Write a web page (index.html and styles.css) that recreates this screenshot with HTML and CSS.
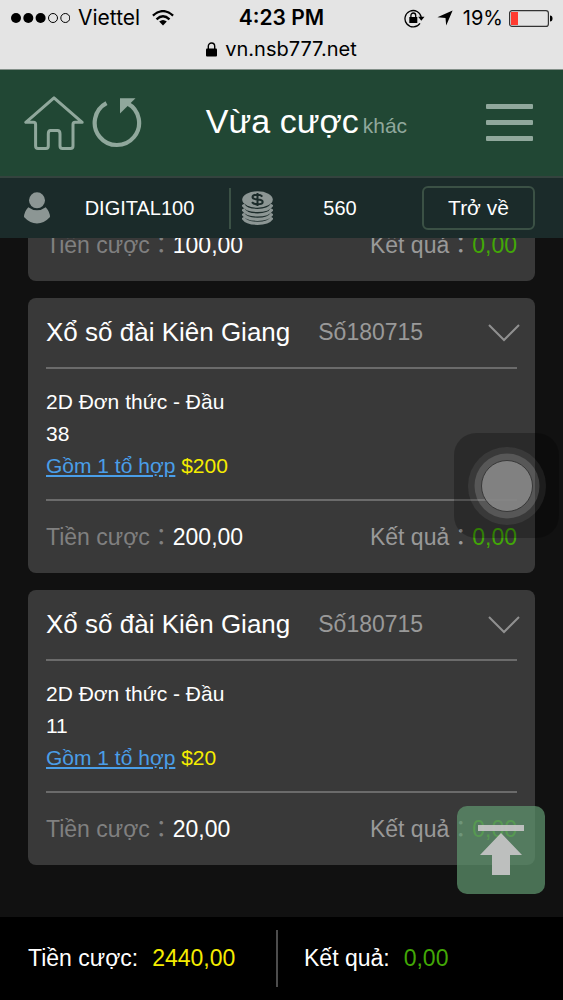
FILE: index.html
```html
<!DOCTYPE html>
<html lang="vi">
<head>
<meta charset="utf-8">
<meta name="viewport" content="width=device-width, initial-scale=1">
<title>Vừa cược</title>
<link rel="stylesheet" href="styles.css">
</head>
<body>
<div class="status">
  <div class="status-row">
    <div class="status-left">
      <svg width="60" height="12" viewBox="0 0 60 12"><g fill="#000"><circle cx="6" cy="6" r="5"/><circle cx="18.300" cy="6" r="5"/><circle cx="30.600" cy="6" r="5"/></g><g fill="none" stroke="#000"><circle cx="43" cy="6" r="4.500"/><circle cx="55.300" cy="6" r="4.500"/></g></svg>
      <span class="carrier">Viettel</span>
      <svg width="22" height="16" viewBox="0 0 22 16"><g fill="none" stroke="#000" stroke-width="2.300"><path d="M.9 5.600Q11-3.400 21.100 5.600"/><path d="M4.500 9.300Q11 3.200 17.500 9.300"/></g><path d="M7.200 11.600Q11 8.600 14.800 11.600L11 15.600Z"/></svg>
    </div>
    <div class="clock">4:23 PM</div>
    <div class="status-right">
      <svg width="21" height="19" viewBox="0 0 21 19"><path d="M16 14.300A8.200 8.200 0 1 1 17.300 8.500" fill="none" stroke="#000" stroke-width="1.300"/><path d="M14.200 7.800h6.300l-3.200 4z"/><rect x="5.300" y="8" width="8" height="6"/><path d="M6.900 8.500V6.400a2.400 2.400 0 0 1 4.800 0V8.500" fill="none" stroke="#000" stroke-width="1.300"/></svg>
      <svg class="locate" width="16" height="16" viewBox="0 0 16 16"><path d="M15.600.4L9.200 15.600 8.500 8 .4 7.200Z"/></svg>
      <span>19%</span>
      <svg width="44" height="17" viewBox="0 0 44 17"><rect x=".6" y=".6" width="38.800" height="15.800" rx="2.500" fill="none" stroke="#333" stroke-width="1.200"/><rect x="2" y="2" width="7" height="13" fill="#ff3b30"/><path d="M41 5.500q2.500 0 2.500 3t-2.500 3z"/></svg>
    </div>
  </div>
  <div class="address">
    <svg width="11" height="15" viewBox="0 0 11 15"><rect x="0" y="6.500" width="11" height="8" rx="1"/><path d="M2.300 7V4.200a3.200 3.200 0 0 1 6.400 0V7" fill="none" stroke="#000" stroke-width="1.400"/></svg>
    <span>vn.nsb777.net</span>
  </div>
</div>

<header class="header">
  <nav class="header-nav">
    <a class="icon-link" href="#" aria-label="Trang chủ"><svg width="60" height="54" viewBox="0 0 60 54"><path d="M30 1.800L1.800 26.300H9.500Q11.600 26.300 11.600 28.500V50Q11.600 52.400 14 52.400H22Q24.300 52.400 24.300 50V38Q24.300 34.500 26.500 34.500H33.500Q36 34.500 36 38V50Q36 52.400 38.500 52.400H46.500Q49 52.400 49 50V28.500Q49 26.300 51 26.300H58.200Z" fill="none" stroke="#90a89c" stroke-width="3" stroke-linejoin="round"/></svg></a>
    <button class="icon-button" type="button" aria-label="Tải lại"><svg width="50" height="50" viewBox="0 0 50 50"><path d="M14.500 5.200A22.200 22.200 0 1 0 35.500 5.300" fill="none" stroke="#90a89c" stroke-width="4.200"/><path d="M28 .2H43.500L28 15.500Z" fill="#90a89c"/></svg></button>
  </nav>
  <div class="title-group"><h1 class="title">Vừa cược</h1><span class="title-more">khác</span></div>
  <button class="icon-button menu" type="button" aria-label="Menu"><svg width="47" height="38" viewBox="0 0 47 38" fill="#90a89c"><rect y="0" width="47" height="5" rx="1"/><rect y="16" width="47" height="5" rx="1"/><rect y="32" width="47" height="5" rx="1"/></svg></button>
</header>

<section class="account">
  <div class="account-item account-user">
    <svg width="26" height="32" viewBox="0 0 26 32" fill="#8c9694"><circle cx="13" cy="8.300" r="8"/><path d="M4.300 15.200Q13 21.500 21.700 15.200Q26 20 26 25Q20 31.500 13 31.500T0 25Q0 20 4.300 15.200Z"/></svg>
    <span class="account-text">DIGITAL100</span>
  </div>
  <div class="account-item">
    <svg width="31" height="34" viewBox="0 0 31 34"><ellipse cx="15.500" cy="8.500" rx="15.300" ry="8.300" fill="#8c9694"/><g fill="none" stroke="#8c9694" stroke-width="3.200"><path d="M.8 13.500Q4 19.500 15.500 19.500T30.200 13.500"/><path d="M.8 18Q4 24 15.500 24T30.200 18"/><path d="M.8 22.500Q4 28.300 15.500 28.300T30.200 22.500"/><path d="M.8 26.500Q4 32.300 15.500 32.300T30.200 26.500"/></g><path d="M20.300 5.600Q19 3.800 15.300 3.800Q10.500 3.800 10.500 6.100Q10.500 8.200 15.500 8.500Q20.700 8.800 20.700 11Q20.700 13.300 15.600 13.300Q11.500 13.300 10 11.200M15.500 2V15" fill="none" stroke="#1b2b2a" stroke-width="2"/></svg>
    <span class="account-text">560</span>
  </div>
  <button class="back" type="button">Trở về</button>
</section>

<main class="bets">
  <article class="card">
    <div class="card-foot"><div class="stake">Tiền cược：<span class="amount">100,00</span></div><div class="result">Kết quả：<span class="win">0,00</span></div></div>
  </article>
  <article class="card">
    <div class="card-head"><h2 class="game">Xổ số đài Kiên Giang</h2><span class="issue">Số180715</span><button class="toggle" type="button" aria-label="Thu gọn"><svg width="32" height="18" viewBox="0 0 32 18"><path d="M1 1L16 16 31 1" fill="none" stroke="#909090" stroke-width="2"/></svg></button></div>
    <div class="card-body"><div>2D Đơn thức - Đầu</div><div>38</div><div><a class="combo" href="#">Gồm 1 tổ hợp</a> <span class="price">$200</span></div></div>
    <div class="card-foot"><div class="stake">Tiền cược：<span class="amount">200,00</span></div><div class="result">Kết quả：<span class="win">0,00</span></div></div>
  </article>
  <article class="card">
    <div class="card-head"><h2 class="game">Xổ số đài Kiên Giang</h2><span class="issue">Số180715</span><button class="toggle" type="button" aria-label="Thu gọn"><svg width="32" height="18" viewBox="0 0 32 18"><path d="M1 1L16 16 31 1" fill="none" stroke="#909090" stroke-width="2"/></svg></button></div>
    <div class="card-body"><div>2D Đơn thức - Đầu</div><div>11</div><div><a class="combo" href="#">Gồm 1 tổ hợp</a> <span class="price">$20</span></div></div>
    <div class="card-foot"><div class="stake">Tiền cược：<span class="amount">20,00</span></div><div class="result">Kết quả：<span class="win">0,00</span></div></div>
  </article>
</main>

<footer class="totals">
  <div class="total total-stake"><span>Tiền cược:</span><span class="price">2440,00</span></div>
  <div class="total total-result"><span>Kết quả:</span><span class="win">0,00</span></div>
</footer>

<button class="assist" type="button" aria-label="AssistiveTouch"><svg width="78" height="78" viewBox="0 0 78 78"><circle cx="39" cy="39" r="39" fill="#fff" fill-opacity=".07"/><circle cx="39" cy="39" r="32.500" fill="#fff" fill-opacity=".15"/><circle cx="39" cy="39" r="25.500" fill="#858585" fill-opacity=".93" stroke="#383838" stroke-width="1"/></svg></button>
<button class="to-top" type="button" aria-label="Lên đầu trang"><svg width="48" height="52" viewBox="0 0 48 52" fill="#c4c4c4" fill-opacity=".95"><rect x="1" y="1" width="46" height="6"/><path d="M24 9L45 31H33V51H15V31H3Z"/></svg></button>
</body>
</html>
```
FILE: styles.css
```css
* { box-sizing: border-box; }

body {
  margin: 0;
  height: 100vh;
  display: flex;
  flex-direction: column;
  overflow: hidden;
  background: #111;
  color: #fff;
  font-family: "Liberation Sans", "Noto Sans CJK TC", Arial, sans-serif;
  font-size: 21px;
}

svg { display: block; flex: none; }

button {
  margin: 0;
  padding: 0;
  border: 0;
  background: none;
  color: inherit;
  font: inherit;
  cursor: pointer;
}

.status {
  flex: none;
  padding: 6px 10px 8px;
  background: #e4e4e4;
  color: #000;
  font-family: Inter, "Liberation Sans", sans-serif;
  font-size: 20px;
  line-height: 24px;
  border-bottom: 1px solid #839089;
}
.status-row { display: grid; grid-template-columns: 1fr auto 1fr; align-items: center; }
.status-left, .status-right { display: flex; align-items: center; }
.carrier { margin: 0 12px 0 8px; font-size: 21px; }
.clock { font-size: 21px; font-weight: 600; }
.status-right { justify-content: flex-end; gap: 6px; }
.locate { margin: 0 4px 0 6px; }
.address { display: flex; justify-content: center; align-items: center; gap: 8px; margin-top: 7px; }

.header {
  flex: none;
  display: grid;
  grid-template-columns: 182fr auto 126fr;
  align-items: center;
  padding: 26px 30px 26px 24px;
  background: #214734;
}
.header-nav { display: flex; align-items: center; gap: 8px; }
.menu { justify-self: end; }
.title-group { display: flex; align-items: baseline; gap: 4px; line-height: 40px; white-space: nowrap; }
.title { margin: 0; font-size: 34px; font-weight: 400; }
.title-more { font-size: 21px; color: #90a89c; }

.account {
  flex: none;
  display: grid;
  grid-template-columns: 207fr 191fr 113px;
  align-items: center;
  padding: 8px 28px 8px 24px;
  background: #1b2b2a;
  border-top: 2px solid #34433e;
}
.account-item { display: flex; align-items: center; height: 41px; margin-right: 15px; padding-left: 11px; }
.account-user { margin: 0; padding: 0; border-right: 2px solid #3b5145; }
.account-text { flex: 1; text-align: center; font-size: 20px; }
.back { height: 44px; border: 2px solid #3b5145; border-radius: 6px; }

.bets {
  flex: 1;
  min-height: 0;
  display: flex;
  flex-direction: column;
  justify-content: flex-end;
  gap: 17px;
  padding: 0 28px 52px;
  overflow: hidden;
}
.card { flex: none; padding: 0 18px; background: #393939; border-radius: 8px; }
.card-head { display: flex; align-items: center; height: 71px; border-bottom: 2px solid #6b6b6b; }
.game { margin: 0 28px 0 0; font-size: 26px; font-weight: 400; white-space: nowrap; }
.issue { color: #999; font-size: 23px; }
.toggle { margin-left: auto; margin-right: -3px; }
.card-body { padding: 17px 0; line-height: 32px; border-bottom: 2px solid #6b6b6b; }
.combo { color: #4a9ee8; }
.price { color: #f5ec00; }
.win { color: #42a806; }
.card-foot { display: flex; justify-content: space-between; height: 72px; font-size: 23px; line-height: 72px; white-space: nowrap; }
.stake { color: #808080; }
.amount { color: #fff; }
.result { color: #999; }

.totals {
  flex: none;
  display: grid;
  grid-template-columns: 250fr 257fr;
  padding: 13px 28px;
  background: #000;
  font-size: 23px;
  line-height: 57px;
  white-space: nowrap;
}
.total { display: flex; gap: 14px; }
.total-stake { border-right: 2px solid #4c4c4c; }
.total-result { padding-left: 26px; }

.assist {
  position: fixed;
  right: 4px;
  bottom: 462px;
  width: 105px;
  height: 105px;
  display: grid;
  place-items: center;
  border-radius: 22px;
  background: rgba(0, 0, 0, .25);
}
.to-top {
  position: fixed;
  right: 18px;
  bottom: 106px;
  width: 88px;
  height: 88px;
  display: grid;
  place-items: center;
  border-radius: 10px;
  background: rgba(95, 148, 110, .73);
}
```
